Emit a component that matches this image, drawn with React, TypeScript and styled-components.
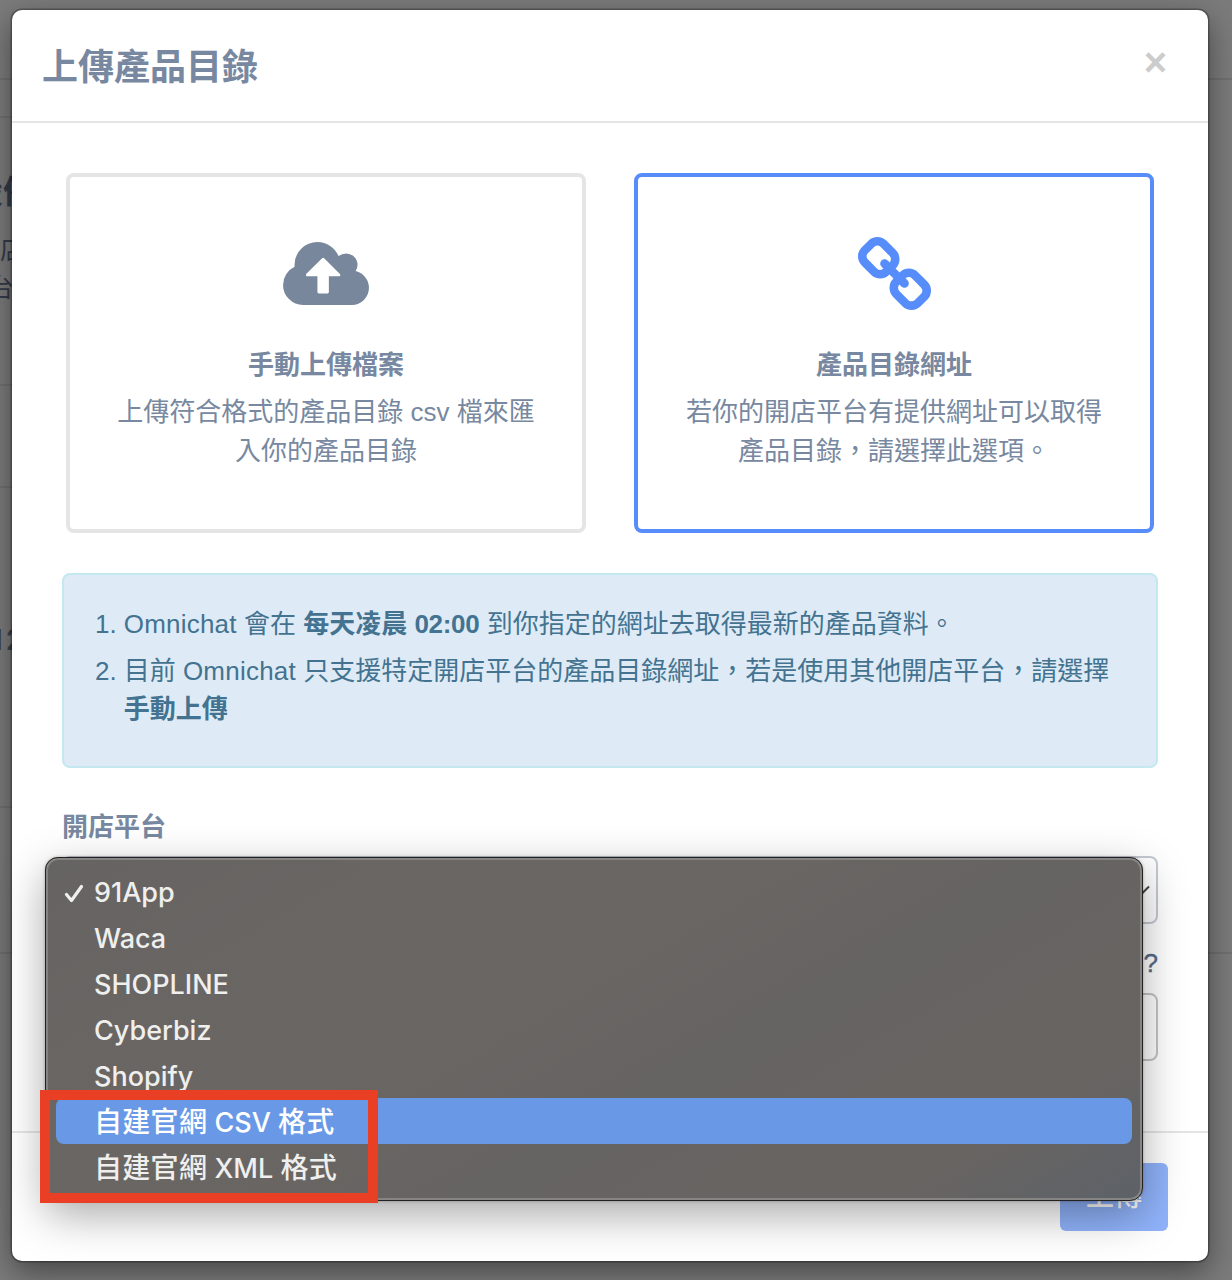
import React from "react";
import styled, { createGlobalStyle, css } from "styled-components";

const sans = `"Liberation Sans", "Noto Sans CJK TC", sans-serif`;
const menuSans = `Inter, "Noto Sans CJK TC", sans-serif`;

const GlobalStyle = createGlobalStyle`
  *, *::before, *::after { box-sizing: border-box; }
  html, body { margin: 0; padding: 0; height: 100%; overflow: hidden; }
  body { font-family: ${sans}; font-size: 26px; line-height: 1.42857; color: #7788a0; }
  h1, h2, p, ol { margin: 0; padding: 0; }
`;

const Screen = styled.div`
  position: relative;
  width: 1232px;
  height: 1280px;
  overflow: hidden;
  background: #7b7b7b;
`;

const Page = styled.div`
  display: flex;
  flex-direction: column;
  height: 100%;
  color: #353c49;
  white-space: nowrap;
`;

const PageSection = styled.section<{ $height: number; $pad?: number; $narrow?: boolean }>`
  width: ${(p) => (p.$narrow ? "600px" : "100%")};
  height: ${(p) => p.$height}px;
  padding-top: ${(p) => p.$pad ?? 0}px;
  border-bottom: 2px solid #707070;
  flex: none;
`;

const PageHeading = styled.div<{ $shift: number }>`
  margin-left: ${(p) => p.$shift}px;
  font-size: 32px;
  line-height: 40px;
  font-weight: 700;
`;

const PageFigure = styled.div`
  margin-left: -9px;
  font: 600 28px/40px ${menuSans};
  letter-spacing: 3px;
  color: #3f4452;
`;

const PageText = styled.div<{ $shift: number; $top?: number }>`
  margin-top: ${(p) => p.$top ?? 0}px;
  margin-left: ${(p) => p.$shift}px;
  line-height: 38px;
`;

const Dialog = styled.div`
  position: absolute;
  top: 10px;
  left: 12px;
  width: 1196px;
  height: 1251px;
  display: flex;
  flex-direction: column;
  background: #fff;
  border-radius: 10px;
  box-shadow: 0 0 0 1.5px rgba(0, 0, 0, 0.28), 0 10px 30px rgba(0, 0, 0, 0.45);
`;

const Header = styled.header`
  display: flex;
  justify-content: space-between;
  align-items: flex-start;
  height: 113px;
  padding: 32px 41px 0 30px;
  border-bottom: 2px solid #e5e5e5;
`;

const Title = styled.h1`
  font-size: 36px;
  line-height: 52px;
  font-weight: 700;
`;

const Close = styled.button`
  border: 0;
  padding: 0;
  background: none;
  font: 700 40px/40px ${sans};
  color: #cccccc;
`;

const Body = styled.main`
  flex: 1;
  display: flex;
  flex-direction: column;
  padding: 50px 50px 0;
`;

const Options = styled.div`
  display: grid;
  grid-template-columns: 1fr 1fr;
  gap: 48px;
  padding: 0 4px;
`;

const OptionCard = styled.div<{ $active?: boolean }>`
  height: 360px;
  border: 4px solid ${(p) => (p.$active ? "#568dfa" : "#e5e5e5")};
  border-radius: 8px;
  display: flex;
  flex-direction: column;
  align-items: center;
  padding: 0 44px;
  text-align: center;
`;

const IconSlot = styled.div<{ $active?: boolean }>`
  height: 168px;
  padding-top: 24px;
  display: flex;
  align-items: center;
  justify-content: center;
  color: ${(p) => (p.$active ? "#568dfa" : "#78879c")};
  svg { display: block; fill: currentColor; }
`;

const OptionTitle = styled.h2`
  font-size: 26px;
  line-height: 40px;
  font-weight: 700;
`;

const OptionText = styled.p`
  margin-top: 8px;
  line-height: 39px;
`;

const Notice = styled.ol`
  height: 195px;
  margin-top: 40px;
  padding: 30px 30px 0 31px;
  border: 2px solid #c3e8f0;
  border-radius: 8px;
  background: #deebf6;
  color: #437390;
  list-style: none;
`;

const NoticeItem = styled.li`
  display: flex;
  gap: 7px;
  line-height: 38px;
  margin-bottom: 9px;
  white-space: nowrap;
`;

const Brand = styled.span`
  letter-spacing: 0.22px;
`;

const Time = styled.span`
  letter-spacing: -0.3px;
`;

const Label = styled.label`
  margin-top: 40px;
  line-height: 38px;
  font-weight: 700;
`;

const field = css`
  height: 68px;
  border: 2px solid #c5c9d3;
  border-radius: 8px;
  background: #fff;
`;

const SelectBox = styled.div`
  ${field}
  flex: none;
  margin-top: 10px;
  padding-right: 6px;
  display: flex;
  align-items: center;
  justify-content: flex-end;
`;

const Help = styled.div`
  height: 38px;
  margin-top: 20px;
  text-align: right;
  line-height: 38px;
  color: #566a88;
  -webkit-text-stroke: 0.4px #566a88;
`;

const UrlInput = styled.div`
  ${field}
  flex: none;
  margin-top: 11px;
  border-color: #c4c4c6;
`;

const Footer = styled.footer`
  height: 130px;
  padding: 30px 40px 0;
  border-top: 2px solid #e5e5e5;
  display: flex;
  justify-content: flex-end;
`;

const Submit = styled.button`
  width: 108px;
  height: 68px;
  border: 0;
  border-radius: 6px;
  padding: 0;
  background: #90b3fb;
  color: #fff;
  font: 500 28px/68px ${sans};
`;

const Menu = styled.div`
  position: absolute;
  top: 857px;
  left: 45px;
  width: 1098px;
  height: 344px;
  padding: 9px 8px;
  border: 2px solid #878685;
  outline: 1px solid #222;
  outline-offset: -1px;
  border-radius: 13px;
  background: linear-gradient(150deg, #666462 0%, #6a6664 35%, #666462 60%, #686462 85%, #5d6268 100%);
  background-clip: padding-box;
  box-shadow: inset 0 0 0 1px #858483, 0 14px 44px rgba(0, 0, 0, 0.34), 0 0 3px rgba(0, 0, 0, 0.3);
`;

const MenuItem = styled.div<{ $highlighted?: boolean }>`
  display: grid;
  grid-template-columns: 38px 1fr;
  align-items: center;
  height: 46px;
  margin: 0 1px;
  padding-top: 3px;
  border-radius: 8px;
  font-family: ${menuSans};
  font-size: 27px;
  font-weight: 450;
  line-height: 43px;
  color: ${(p) => (p.$highlighted ? "#fff" : "#efefee")};
  background: ${(p) => (p.$highlighted ? "#6999e6" : "transparent")};
  svg { display: block; margin-left: 7px; }
`;

const Han = styled.span`
  font-size: 28px;
  letter-spacing: 0.3px;
`;

const Callout = styled.div`
  position: absolute;
  top: 1090px;
  left: 40px;
  width: 338px;
  height: 113px;
  border: 10px solid #e93f25;
`;

const CloudUpload = () => (
  <svg width="86" height="63" viewBox="-64 128 1920 1408">
    <path d="M1216 864q0-14-9-23l-352-352q-9-9-23-9t-23 9l-351 351q-10 12-10 24 0 14 9 23t23 9h224v352q0 13 9.5 22.5t22.5 9.5h192q13 0 22.5-9.5t9.5-22.5v-352h224q13 0 22.5-9.5t9.5-22.5zm640 288q0 159-112.5 271.5t-271.5 112.5h-1088q-185 0-316.5-131.5t-131.5-316.5q0-130 70-240t188-165q-2-30-2-43 0-212 150-362t362-150q156 0 285.5 87t188.5 231q71-62 166-62 106 0 181 75t75 181q0 76-41 138 130 31 213.5 135.5t83.5 238.5z" />
  </svg>
);

const Chain = () => (
  <svg width="73" height="73" viewBox="16 16 1632 1632">
    <path d="M1456 1216q0-40-28-68l-208-208q-28-28-68-28-42 0-72 32 3 3 19 18.5t21.5 21.5 15 19 13 25.5 3.5 27.5q0 40-28 68t-68 28q-15 0-27.5-3.5t-25.5-13-19-15-21.5-21.5-18.5-19q-33 31-33 73 0 40 28 68l206 207q27 27 68 27 40 0 68-26l147-146q28-28 28-67zm-703-705q0-40-28-68l-206-207q-28-28-68-28-39 0-68 27l-147 146q-28 28-28 67 0 40 28 68l208 208q27 27 68 27 42 0 72-31-3-3-19-18.5t-21.5-21.5-15-19-13-25.5-3.5-27.5q0-40 28-68t68-28q15 0 27.5 3.5t25.5 13 19 15 21.5 21.5 18.5 19q33-31 33-73zm895 705q0 120-85 203l-147 146q-83 83-203 83-121 0-204-85l-206-207q-83-83-83-203 0-123 88-209l-88-88q-86 88-208 88-120 0-204-84l-208-208q-84-84-84-204t85-203l147-146q83-83 203-83 121 0 204 85l206 207q83 83 83 203 0 123-88 209l88 88q86-88 208-88 120 0 204 84l208 208q84 84 84 204z" />
  </svg>
);

const Check = () => (
  <svg width="22" height="22" viewBox="0 0 22 22" fill="none" stroke="#efefee" strokeWidth="3.2" strokeLinecap="round" strokeLinejoin="round">
    <path d="M3.5 12.5 8.5 18.5 18.5 4.5" />
  </svg>
);

const Chevron = () => (
  <svg width="16" height="10" viewBox="0 0 16 10" fill="none" stroke="#444" strokeWidth="2">
    <path d="M1 1.5 8 8.5 15 1.5" />
  </svg>
);

const platforms: { key: string; label: React.ReactNode }[] = [
  { key: "91app", label: "91App" },
  { key: "waca", label: "Waca" },
  { key: "shopline", label: "SHOPLINE" },
  { key: "cyberbiz", label: "Cyberbiz" },
  { key: "shopify", label: "Shopify" },
  { key: "csv", label: <><Han>自建官網</Han> CSV <Han>格式</Han></> },
  { key: "xml", label: <><Han>自建官網</Han> XML <Han>格式</Han></> },
];

export default function App() {
  return (
    <Screen lang="zh-Hant">
      <GlobalStyle />
      <Page>
        <PageSection $height={80} />
        <PageSection $height={38} $narrow />
        <PageSection $height={268} $pad={54} $narrow>
          <PageHeading $shift={-29}>設備</PageHeading>
          <PageText $shift={0} $top={19}>店</PageText>
          <PageText $shift={-12}>台</PageText>
        </PageSection>
        <PageSection $height={102} $narrow />
        <PageSection $height={320} $pad={132} $narrow>
          <PageFigure>12</PageFigure>
        </PageSection>
        <PageSection $height={146} />
      </Page>

      <Dialog>
        <Header>
          <Title>上傳產品目錄</Title>
          <Close>×</Close>
        </Header>
        <Body>
          <Options>
            <OptionCard>
              <IconSlot><CloudUpload /></IconSlot>
              <OptionTitle>手動上傳檔案</OptionTitle>
              <OptionText>上傳符合格式的產品目錄 csv 檔來匯<br />入你的產品目錄</OptionText>
            </OptionCard>
            <OptionCard $active>
              <IconSlot $active><Chain /></IconSlot>
              <OptionTitle>產品目錄網址</OptionTitle>
              <OptionText>若你的開店平台有提供網址可以取得<br />產品目錄，請選擇此選項。</OptionText>
            </OptionCard>
          </Options>
          <Notice>
            <NoticeItem>
              <span>1.</span>
              <span><Brand>Omnichat</Brand> 會在 <b>每天凌晨 <Time>02:00</Time></b> 到你指定的網址去取得最新的產品資料。</span>
            </NoticeItem>
            <NoticeItem>
              <span>2.</span>
              <span>目前 <Brand>Omnichat</Brand> 只支援特定開店平台的產品目錄網址，若是使用其他開店平台，請選擇<br /><b>手動上傳</b></span>
            </NoticeItem>
          </Notice>
          <Label>開店平台</Label>
          <SelectBox><Chevron /></SelectBox>
          <Help>?</Help>
          <UrlInput />
        </Body>
        <Footer>
          <Submit>上傳</Submit>
        </Footer>
      </Dialog>

      <Menu>
        {platforms.map(({ key, label }) => (
          <MenuItem key={key} $highlighted={key === "csv"}>
            <span>{key === "91app" && <Check />}</span>
            <span>{label}</span>
          </MenuItem>
        ))}
      </Menu>
      <Callout />
    </Screen>
  );
}
